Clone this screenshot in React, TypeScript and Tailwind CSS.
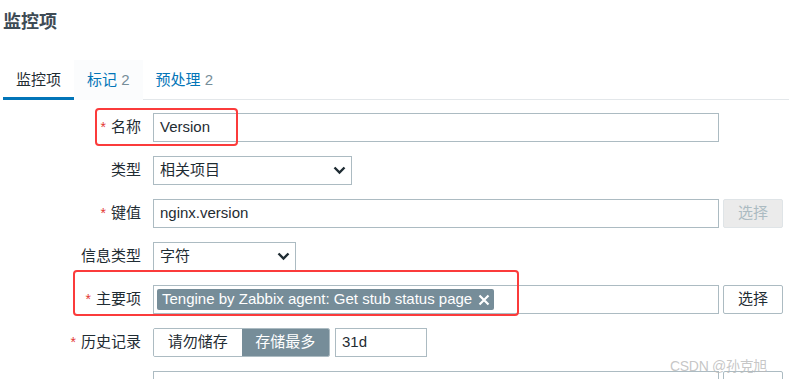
import type { ReactNode } from "react";

const FONT = "font-['Liberation_Sans','Noto_Sans_CJK_SC',sans-serif]";

function Label({ text, required }: { text: string; required?: boolean }) {
  return (
    <div className="flex items-center justify-end h-[29px] text-[15px] text-[#1f2c33]">
      {required && <span className="text-[#e33734] mr-[5px] text-[14px]">*</span>}
      {text}
    </div>
  );
}

function TextBox({ value, width = "w-[566px]", children }: { value?: string; width?: string; children?: ReactNode }) {
  return (
    <div className={`${width} h-[29px] border border-[#acbbc2] bg-white px-[6px] flex items-center text-[15px] text-[#1f2c33] shrink-0`}>
      {value}
      {children}
    </div>
  );
}

function Select({ value, width }: { value: string; width: string }) {
  return (
    <div className={`${width} h-[29px] border border-[#acbbc2] bg-white pl-[6px] pr-[5px] flex items-center justify-between text-[15px] text-[#1f2c33]`}>
      <span>{value}</span>
      <svg width="13" height="9" viewBox="0 0 13 9" fill="none">
        <polyline points="1.5,1.5 6.5,6.5 11.5,1.5" stroke="#1f2c33" strokeWidth="2.4" />
      </svg>
    </div>
  );
}

function PickButton({ disabled, label = "选择" }: { disabled?: boolean; label?: string }) {
  return (
    <button
      className={
        disabled
          ? "w-[60px] h-[29px] rounded-[2px] border border-[#dfe4e7] bg-[#ebebeb] text-[15px] text-[#acbbc2]"
          : "w-[60px] h-[29px] rounded-[2px] border border-[#acbbc2] bg-white text-[15px] text-[#1f2c33]"
      }
    >
      {label}
    </button>
  );
}

export default function App() {
  return (
    <div className={`relative w-[789px] h-[379px] overflow-hidden bg-white ${FONT}`}>
      <h1 className="pl-[3px] pt-[11px] text-[18px] leading-[22px] font-bold text-[#3e4b55]">监控项</h1>

      {/* tabs */}
      <div className="mt-[27px] ml-[3px] flex border-b border-[#e3e7ea]">
        <div className="-mb-px px-[13px] pt-[11px] pb-[9px] text-[15px] leading-[17px] text-[#1f2c33] border-b-[3px] border-[#0275b8]">
          监控项
        </div>
        <div className="-mb-px px-[13px] pt-[11px] pb-[9px] text-[15px] leading-[17px] text-[#0275b8] border-b-[3px] border-transparent bg-[#fbfcfd]">
          标记 <span className="text-[#768d99]">2</span>
        </div>
        <div className="-mb-px px-[13px] pt-[11px] pb-[9px] text-[15px] leading-[17px] text-[#0275b8] border-b-[3px] border-transparent">
          预处理 <span className="text-[#768d99]">2</span>
        </div>
      </div>

      {/* form */}
      <div className="mt-[13px] grid grid-cols-[141px_1fr] gap-x-[12px] gap-y-[14px]">
        <Label text="名称" required />
        <TextBox value="Version" />

        <Label text="类型" />
        <div className="flex">
          <Select value="相关项目" width="w-[199px]" />
        </div>

        <Label text="键值" required />
        <div className="flex gap-[4px]">
          <TextBox value="nginx.version" />
          <PickButton disabled />
        </div>

        <Label text="信息类型" />
        <div className="flex">
          <Select value="字符" width="w-[143px]" />
        </div>

        <Label text="主要项" required />
        <div className="flex gap-[4px]">
          <div className="w-[566px] h-[29px] border border-[#acbbc2] bg-white pl-[3px] flex items-center shrink-0">
            <span className="h-[21px] w-[337px] rounded-[2px] bg-[#768d99] pl-[5px] flex items-center gap-[6px] text-[15px] text-white">
              Tengine by Zabbix agent: Get stub status page
              <svg width="12" height="12" viewBox="0 0 12 12">
                <path d="M1.5 1.5 L10.5 10.5 M10.5 1.5 L1.5 10.5" stroke="#ffffff" strokeWidth="2.2" />
              </svg>
            </span>
          </div>
          <PickButton />
        </div>

        <Label text="历史记录" required />
        <div className="flex gap-[5px]">
          <div className="flex w-[177px] h-[29px] border border-[#acbbc2] rounded-[2px] overflow-hidden text-[15px]">
            <span className="flex-1 flex items-center justify-center bg-white text-[#1f2c33]">请勿储存</span>
            <span className="flex-1 flex items-center justify-center bg-[#768d99] text-white">存储最多</span>
          </div>
          <TextBox value="31d" width="w-[92px]" />
        </div>

        {/* next row, cut off by the bottom edge */}
        <div />
        <div className="flex gap-[4px]">
          <TextBox />
          <PickButton label="" />
        </div>
      </div>

      {/* highlight boxes */}
      <div className="absolute left-[95px] top-[108px] w-[143px] h-[38px] rounded-[4px] border-2 border-[#fb3b3b]" />
      <div className="absolute left-[73px] top-[270px] w-[446px] h-[46px] rounded-[4px] border-2 border-[#fb3b3b]" />

      {/* watermark */}
      <div className="absolute left-[670px] top-[356px] text-[14px] text-[#b8b8b8]/80 tracking-[-0.3px]">CSDN @孙克旭</div>
    </div>
  );
}
